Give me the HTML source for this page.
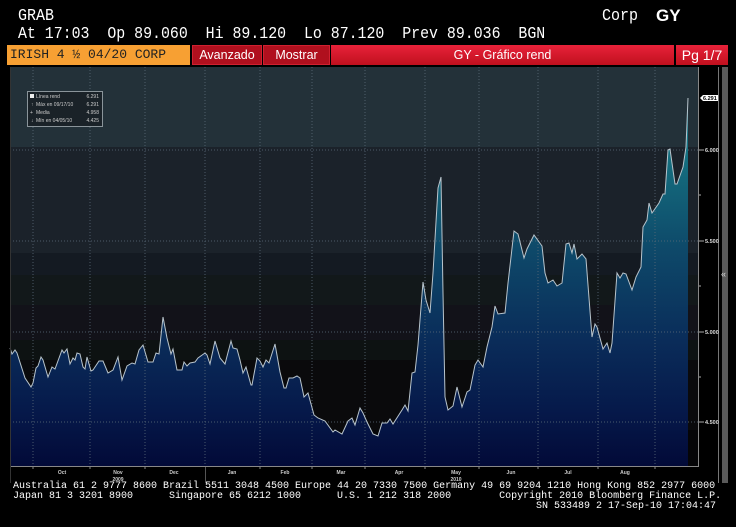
<!DOCTYPE html>
<html><head><meta charset="utf-8">
<style>
html,body{margin:0;padding:0;background:#000;width:736px;height:527px;overflow:hidden}
body{position:relative;font-family:"Liberation Mono",monospace;color:#fff}
.t{position:absolute;white-space:pre;line-height:1}
.bar{position:absolute;top:45px;height:20px;font-family:"Liberation Sans",sans-serif;font-size:12.5px;line-height:20px;white-space:pre}
</style></head><body>
<div class="t" style="left:18px;top:8px;font-size:15px;transform:scaleY(1.1);transform-origin:0 0">GRAB</div>
<div class="t" style="left:18px;top:27px;font-size:14.9px;transform:scaleY(1.1);transform-origin:0 0">At 17:03  Op 89.060  Hi 89.120  Lo 87.120  Prev 89.036  BGN</div>
<div class="t" style="left:602px;top:8px;font-size:15px;transform:scaleY(1.1);transform-origin:0 0">Corp</div>
<div class="t" style="left:656px;top:7px;font-size:17px;font-weight:bold;font-family:'Liberation Sans',sans-serif">GY</div>

<div class="bar" style="left:7px;width:183px;background:#f7a033;color:#222;padding-left:3px;box-sizing:border-box;font-family:'Liberation Mono',monospace;font-size:13px">IRISH 4 ½ 04/20 CORP</div>
<div class="bar" style="left:192px;width:70px;background:#b0101e;text-align:center;box-sizing:border-box;border:1px solid #d02030;line-height:18px">Avanzado</div>
<div class="bar" style="left:263px;width:67px;background:#b0101e;text-align:center;box-sizing:border-box;border:1px solid #d02030;line-height:18px">Mostrar</div>
<div class="bar" style="left:331px;width:343px;background:linear-gradient(#e8223a,#c0101e);text-align:center">GY - Gráfico rend</div>
<div class="bar" style="left:676px;width:52px;background:linear-gradient(#e8223a,#c0101e);text-align:center;font-size:14px">Pg 1/7</div>

<svg width="736" height="527" style="position:absolute;left:0;top:0" xmlns="http://www.w3.org/2000/svg">
<defs>
<linearGradient id="f" gradientUnits="userSpaceOnUse" x1="0" y1="100" x2="0" y2="466">
<stop offset="0" stop-color="#1a8090"/>
<stop offset="0.15" stop-color="#157080"/>
<stop offset="0.4" stop-color="#0e4a6a"/>
<stop offset="0.65" stop-color="#0a2d5a"/>
<stop offset="0.85" stop-color="#06194a"/>
<stop offset="1" stop-color="#020a38"/>
</linearGradient>
</defs>
<rect x="10" y="67" width="688" height="400" fill="#0a0a0c"/>
<rect x="10" y="67" width="688" height="80" fill="#233139"/>
<rect x="10" y="147" width="688" height="106" fill="#1b222a"/>
<rect x="10" y="253" width="688" height="22" fill="#141a22"/>
<rect x="10" y="275" width="688" height="30" fill="#12181a"/>
<rect x="10" y="305" width="688" height="35" fill="#121219"/>
<rect x="10" y="340" width="688" height="20" fill="#0d1212"/>
<rect x="10" y="360" width="688" height="70" fill="#0a0a0c"/>
<rect x="10" y="430" width="688" height="37" fill="#050507"/>
<path d="M10,348 L12,354 15,350 17,353 25,378 31,387 33,383 36,368 38,366 41,357 43,360 48,377 52,367 55,369 62,350 64,353 67,349 70,364 73,358 75,360 77,353 80,354 83,367 85,369 87,357 91,371 93,370 99,361 103,361 108,373 113,370 118,357 122,380 127,366 132,363 135,364 139,350 143,345 148,362 153,362 156,353 159,354 163,317 167,338 171,354 173,349 177,370 182,370 184,362 187,366 190,363 195,362 198,358 205,353 207,355 210,364 215,341 220,358 225,364 231,341 233,348 237,349 240,360 243,373 246,367 251,385 252,385 257,358 260,361 263,367 266,360 269,363 275,344 280,372 284,388 286,388 289,378 293,378 297,376 300,378 304,397 308,393 314,415 318,418 325,421 333,432 335,430 342,434 348,421 352,418 355,425 360,408 363,413 367,422 373,434 378,436 382,423 387,423 390,419 393,424 402,410 405,405 408,411 412,373 415,372 418,345 423,282 426,300 430,313 433,273 438,188 441,177 443,293 445,397 448,410 453,406 457,387 462,407 467,392 470,390 475,365 478,360 483,367 487,347 492,327 495,306 498,314 505,313 508,283 514,231 518,234 524,258 527,249 534,235 542,246 545,273 548,283 553,280 557,286 562,283 566,244 569,243 572,253 574,244 577,259 582,254 586,259 592,337 595,324 597,327 603,349 607,343 610,353 612,343 617,273 620,278 623,273 626,274 632,290 636,277 641,267 643,227 647,220 649,203 652,213 659,203 663,194 665,194 668,150 670,149 675,184 677,184 683,167 686,147 688,98 L688,466 L10,466 Z" fill="url(#f)"/>
<g stroke="#5a6a78" stroke-width="1" stroke-dasharray="1,2" opacity="0.8">
<line x1="33" y1="67" x2="33" y2="466"/><line x1="90" y1="67" x2="90" y2="466"/><line x1="145" y1="67" x2="145" y2="466"/><line x1="205" y1="67" x2="205" y2="466"/><line x1="260" y1="67" x2="260" y2="466"/><line x1="312" y1="67" x2="312" y2="466"/><line x1="365" y1="67" x2="365" y2="466"/><line x1="425" y1="67" x2="425" y2="466"/><line x1="479" y1="67" x2="479" y2="466"/><line x1="538" y1="67" x2="538" y2="466"/><line x1="598" y1="67" x2="598" y2="466"/><line x1="655" y1="67" x2="655" y2="466"/>
<line x1="10" y1="150" x2="698" y2="150"/><line x1="10" y1="241" x2="698" y2="241"/><line x1="10" y1="332" x2="698" y2="332"/><line x1="10" y1="422" x2="698" y2="422"/>
</g>
<path d="M10,348 L12,354 15,350 17,353 25,378 31,387 33,383 36,368 38,366 41,357 43,360 48,377 52,367 55,369 62,350 64,353 67,349 70,364 73,358 75,360 77,353 80,354 83,367 85,369 87,357 91,371 93,370 99,361 103,361 108,373 113,370 118,357 122,380 127,366 132,363 135,364 139,350 143,345 148,362 153,362 156,353 159,354 163,317 167,338 171,354 173,349 177,370 182,370 184,362 187,366 190,363 195,362 198,358 205,353 207,355 210,364 215,341 220,358 225,364 231,341 233,348 237,349 240,360 243,373 246,367 251,385 252,385 257,358 260,361 263,367 266,360 269,363 275,344 280,372 284,388 286,388 289,378 293,378 297,376 300,378 304,397 308,393 314,415 318,418 325,421 333,432 335,430 342,434 348,421 352,418 355,425 360,408 363,413 367,422 373,434 378,436 382,423 387,423 390,419 393,424 402,410 405,405 408,411 412,373 415,372 418,345 423,282 426,300 430,313 433,273 438,188 441,177 443,293 445,397 448,410 453,406 457,387 462,407 467,392 470,390 475,365 478,360 483,367 487,347 492,327 495,306 498,314 505,313 508,283 514,231 518,234 524,258 527,249 534,235 542,246 545,273 548,283 553,280 557,286 562,283 566,244 569,243 572,253 574,244 577,259 582,254 586,259 592,337 595,324 597,327 603,349 607,343 610,353 612,343 617,273 620,278 623,273 626,274 632,290 636,277 641,267 643,227 647,220 649,203 652,213 659,203 663,194 665,194 668,150 670,149 675,184 677,184 683,167 686,147 688,98" fill="none" stroke="#b8c4cc" stroke-width="1"/>
<rect x="698" y="67" width="20" height="400" fill="#000"/>
<line x1="698.5" y1="67" x2="698.5" y2="467" stroke="#888"/>
<line x1="10" y1="466.5" x2="698" y2="466.5" stroke="#888"/>
<line x1="718.5" y1="67" x2="718.5" y2="483" stroke="#777"/>
<line x1="10.5" y1="67" x2="10.5" y2="483" stroke="#333"/>
<line x1="205.5" y1="467" x2="205.5" y2="483" stroke="#555"/>
<rect x="722" y="67" width="6" height="416" fill="#5a5a5a"/>
<text x="721" y="277" font-size="9" fill="#ddd" font-family="Liberation Sans">«</text>
<g stroke="#aaa"><line x1="699" y1="150" x2="704" y2="150"/><line x1="699" y1="241" x2="704" y2="241"/><line x1="699" y1="332" x2="704" y2="332"/><line x1="699" y1="422" x2="704" y2="422"/>
<line x1="699" y1="195" x2="701" y2="195"/><line x1="699" y1="286" x2="701" y2="286"/><line x1="699" y1="377" x2="701" y2="377"/></g>
<g font-family="Liberation Sans" font-size="5.5" fill="#ddd" font-weight="bold">
<text x="705" y="152">6.000</text><text x="705" y="243">5.500</text><text x="705" y="334">5.000</text><text x="705" y="424">4.500</text>
</g>
<path d="M700,98 L703,95 L718,95 L718,101 L703,101 Z" fill="#fff"/>
<text x="703" y="100" font-family="Liberation Sans" font-size="5.5" fill="#000" font-weight="bold">6.291</text>
<g font-family="Liberation Sans" font-size="5" fill="#ccc" font-weight="bold" text-anchor="middle">
<text x="62" y="474">Oct</text><text x="118" y="474">Nov</text><text x="174" y="474">Dec</text><text x="232" y="474">Jan</text><text x="285" y="474">Feb</text><text x="341" y="474">Mar</text><text x="399" y="474">Apr</text><text x="456" y="474">May</text><text x="511" y="474">Jun</text><text x="568" y="474">Jul</text><text x="625" y="474">Aug</text>
<text x="118" y="481">2009</text><text x="456" y="481">2010</text>
</g>
<g stroke="#888"><line x1="33" y1="467" x2="33" y2="469"/><line x1="90" y1="467" x2="90" y2="469"/><line x1="145" y1="467" x2="145" y2="469"/><line x1="260" y1="467" x2="260" y2="469"/><line x1="312" y1="467" x2="312" y2="469"/><line x1="365" y1="467" x2="365" y2="469"/><line x1="425" y1="467" x2="425" y2="469"/><line x1="479" y1="467" x2="479" y2="469"/><line x1="538" y1="467" x2="538" y2="469"/><line x1="598" y1="467" x2="598" y2="469"/><line x1="655" y1="467" x2="655" y2="469"/></g>
<rect x="27.5" y="91.5" width="75" height="35" fill="#1a2228" stroke="#8a949a"/>
<g font-family="Liberation Sans" font-size="5" fill="#ccc">
<rect x="30" y="94" width="4" height="4" fill="#eee"/>
<text x="36" y="98">Línea rend</text><text x="99" y="98" text-anchor="end">6.291</text>
<text x="31" y="106">↑</text><text x="36" y="106">Máx en 09/17/10</text><text x="99" y="106" text-anchor="end">6.291</text>
<text x="30" y="114">+</text><text x="36" y="114">Media</text><text x="99" y="114" text-anchor="end">4.958</text>
<text x="31" y="122">↓</text><text x="36" y="122">Mín en 04/05/10</text><text x="99" y="122" text-anchor="end">4.425</text>
</g>
</svg>
<div class="t" style="left:13px;top:482px;font-size:10px">Australia 61 2 9777 8600 Brazil 5511 3048 4500 Europe 44 20 7330 7500 Germany 49 69 9204 1210 Hong Kong 852 2977 6000</div>
<div class="t" style="left:13px;top:492px;font-size:10px">Japan 81 3 3201 8900      Singapore 65 6212 1000      U.S. 1 212 318 2000        Copyright 2010 Bloomberg Finance L.P.</div>
<div class="t" style="left:536px;top:502px;font-size:10px">SN 533489 2 17-Sep-10 17:04:47</div>
</body></html>
